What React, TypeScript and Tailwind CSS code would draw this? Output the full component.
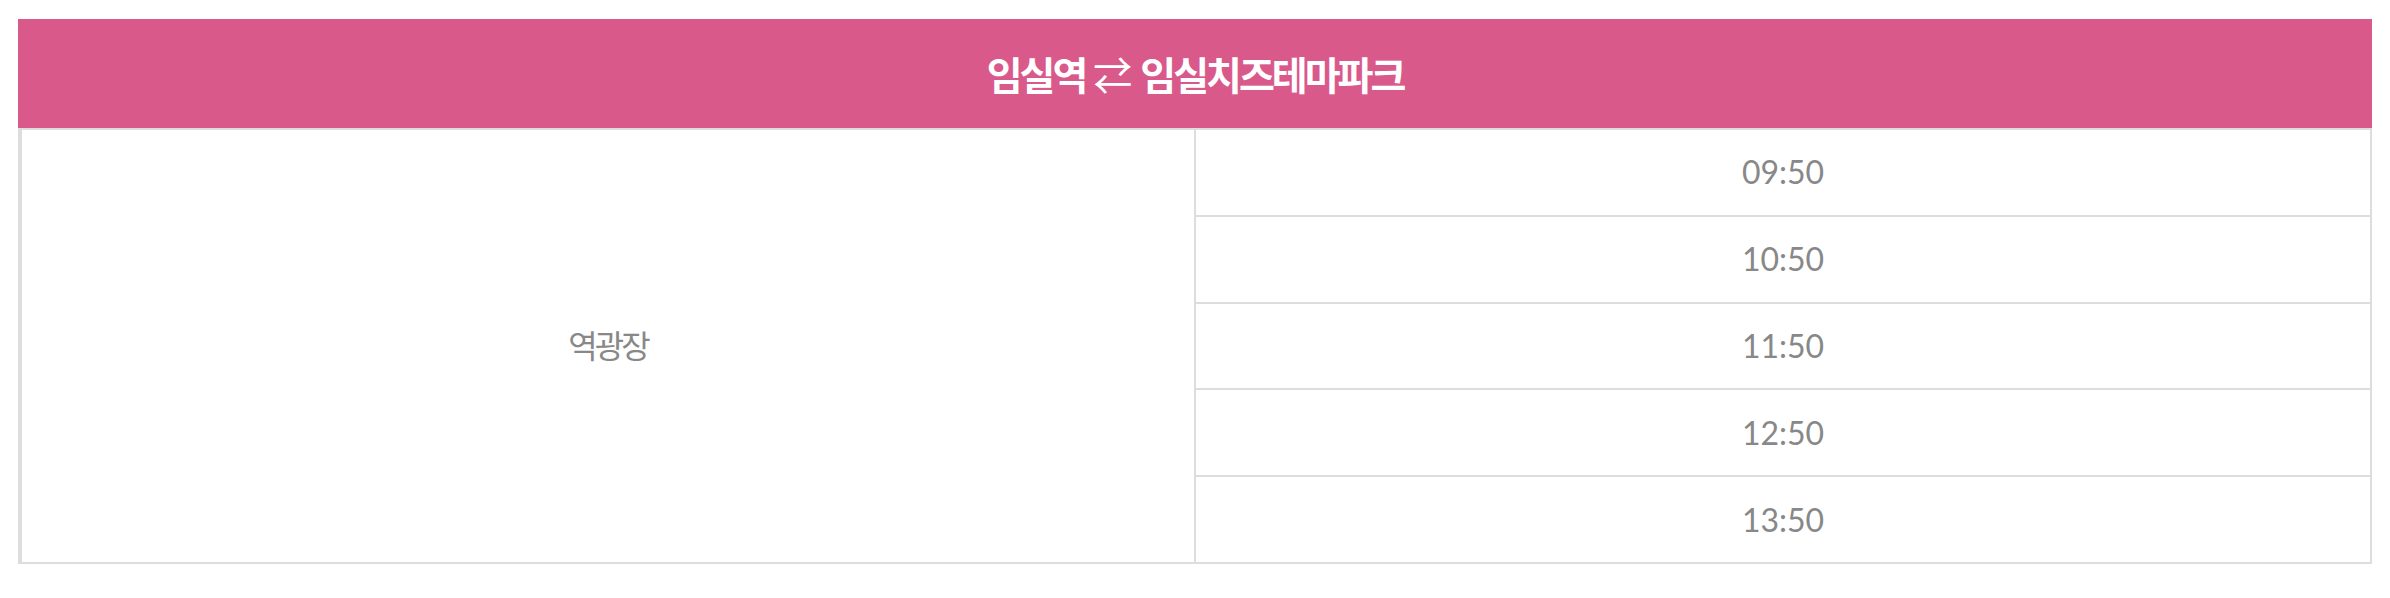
const times = ["09:50", "10:50", "11:50", "12:50", "13:50"];

export default function App() {
  return (
    <div className="w-[2390px] h-[598px] bg-white pl-[18px] pt-[19px] font-['Lato','Noto_Sans_CJK_KR',sans-serif]">
      <div className="w-[2354px]">
        {/* title bar */}
        <div className="h-[109px] bg-[#d9598b] flex items-center justify-center">
          <h2 className="text-white font-bold text-[39px] tracking-[-3px] leading-none font-['Noto_Sans_CJK_KR',sans-serif]">
            임실역<span className="font-normal tracking-normal mx-[8px]">⇄</span>임실치즈테마파크
          </h2>
        </div>

        {/* schedule */}
        <div className="grid grid-cols-2 border-t-2 border-b-2 border-l-4 border-r-2 border-[#dddddd] text-[#888888] text-[32px]">
          <div className="flex items-center justify-center border-r-2 border-[#dddddd] tracking-[-3px]">
            역광장
          </div>
          <div className="flex flex-col">
            {times.map((t, i) =>
              i < times.length - 1 ? (
                <div key={t} className="h-[86.8px] flex items-center justify-center border-b-2 border-[#dddddd]">
                  {t}
                </div>
              ) : (
                <div key={t} className="h-[84.8px] flex items-center justify-center">
                  {t}
                </div>
              )
            )}
          </div>
        </div>
      </div>
    </div>
  );
}
